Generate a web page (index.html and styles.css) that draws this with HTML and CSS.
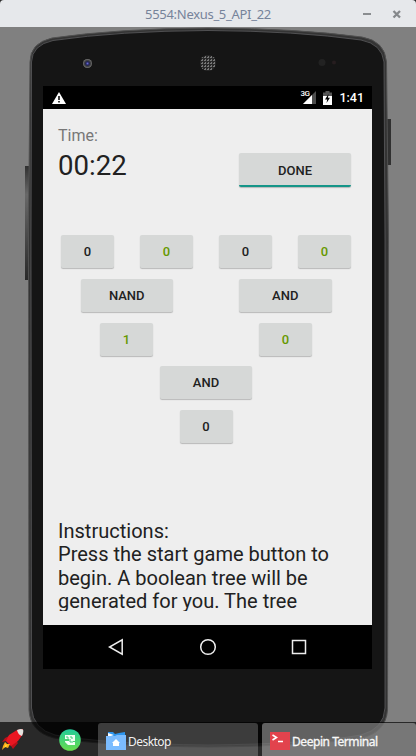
FILE: index.html
```html
<!DOCTYPE html>
<html lang="en">
<head>
<meta charset="utf-8">
<title>5554:Nexus_5_API_22</title>
<link rel="stylesheet" href="styles.css">
</head>
<body>
<header class="titlebar">
  <span class="title">5554:Nexus_5_API_22</span>
  <svg class="controls" width="60" height="27" viewBox="0 0 60 27"><path d="M7 13h8" stroke="#8a8d90" stroke-width="2"/><path d="M37.500 10l6.500 6.500M44 10l-6.500 6.500" stroke="#85888b" stroke-width="2.300"/></svg>
</header>
<main class="stage">
  <svg class="device" width="416" height="729" viewBox="0 27 416 729">
    <defs>
      <linearGradient id="key" x1="0" y1="0" x2="0" y2="1"><stop offset="0" stop-color="#303030"/><stop offset=".25" stop-color="#686868"/><stop offset="1" stop-color="#292929"/></linearGradient>
      <pattern id="mesh" width="3" height="3" patternUnits="userSpaceOnUse"><path d="M0 0h2v1H0zM1 2h1v1H1z" fill="#777"/></pattern>
      <radialGradient id="lens"><stop offset="0" stop-color="#6868d8"/><stop offset=".4" stop-color="#202350"/><stop offset=".7" stop-color="#444"/><stop offset="1" stop-color="#777"/></radialGradient>
    </defs>
    <rect x="25" y="166" width="4" height="114" fill="url(#key)"/>
    <rect x="387" y="119" width="4" height="46" fill="#303030"/>
    <path d="M28.500 240L30 62Q30 43 52 38Q118 28.500 208 28Q298 28.500 362 37Q385 41 386.500 62L388.500 240L387.500 710Q386 732 362 738Q310 746 208 747Q106 746 54 738Q30 732 29 710Z" fill="#343434" stroke="#515151"/>
    <path d="M31 240L31.500 62Q32 45 53 40.500Q119 31 208 30.500Q297 31 361 40Q382 44 384 62L385 240L385 708Q384 729 361 735Q310 744 208 745Q106 744 55 735Q33 729 31.500 708Z" fill="#151515" stroke="#5c5c5e" stroke-width=".8"/>
    <circle cx="87.500" cy="63.500" r="4.500" fill="url(#lens)"/>
    <circle cx="208" cy="63" r="8" fill="#292929"/><circle cx="208" cy="63" r="8" fill="url(#mesh)"/>
    <circle cx="322" cy="62.500" r="3.500" fill="#222"/><circle cx="334" cy="62.500" r="2" fill="#261d1f"/>
  </svg>
  <section class="screen">
    <div class="status">
      <svg width="14" height="12" viewBox="0 0 14 12"><path d="M7 0l7 12H0z" fill="#fff"/><path d="M7 4v4M7 9v1.500" stroke="#000" stroke-width="1.500"/></svg>
      <div class="status-right">
        <span class="net">3G</span>
        <svg class="signal" width="13" height="13" viewBox="0 0 13 13"><path d="M0 13L13 0v13z" fill="#4d4d4d"/><path d="M0 13L9 4v9z" fill="#fff"/></svg>
        <svg class="battery" width="9" height="14" viewBox="0 0 9 14"><path d="M0 1.500h2.500V0h4v1.500H9V6H0z" fill="#555"/><path d="M0 5h9v9H0z" fill="#fff"/><path d="M5.500 3L2 8.500h2.200L3.500 12 7 6.800H5z" fill="#000"/></svg>
        <span class="clock">1:41</span>
      </div>
    </div>
    <div class="app">
      <div class="top">
        <div><div class="label">Time:</div><div class="timer">00:22</div></div>
        <button class="btn done">DONE</button>
      </div>
      <div class="tree">
        <div class="row inputs"><button class="btn">0</button><button class="btn green">0</button><button class="btn">0</button><button class="btn green">0</button></div>
        <div class="row gates"><button class="btn wide">NAND</button><button class="btn wide">AND</button></div>
        <div class="row results"><button class="btn green">1</button><button class="btn green">0</button></div>
        <div class="row"><button class="btn wide">AND</button></div>
        <div class="row"><button class="btn">0</button></div>
      </div>
      <div class="instructions">Instructions:<br>Press the start game button to<br>begin. A boolean tree will be<br>generated for you. The tree</div>
    </div>
    <nav class="nav">
      <svg width="16" height="18" viewBox="0 0 16 18"><path d="M14.200 1.800v14.400L1.500 9z"/></svg>
      <svg width="18" height="18" viewBox="0 0 18 18"><circle cx="9" cy="9" r="7.300"/></svg>
      <svg width="16" height="18" viewBox="0 0 16 18"><path d="M1.500 2.500h13v13h-13z"/></svg>
    </nav>
  </section>
</main>
<footer class="taskbar">
  <div class="launchers">
    <svg width="23" height="22" viewBox="0 0 23 22"><path d="M4 9L10 6L17 14L12 20L10 17L5 12L1 13z" fill="#ba1019"/><path d="M5 12L8 6L16 1L22 0L22 5L17 12L10 17z" fill="#e91621"/><path d="M16 1Q20-.5 22 .5Q23 3 21 7Q17 6 16 1z" fill="#e3e3df"/><path d="M4 13L6 15L9 15L7 19L4 18L1 21L2 17z" fill="#ffad18"/><path d="M5 15L6 17L3 19z" fill="#ffe13a"/></svg>
    <svg width="22" height="22" viewBox="0 0 22 22"><defs><linearGradient id="g" x1="0" y1="0" x2="0" y2="1"><stop stop-color="#21cb9b"/><stop offset="1" stop-color="#68dc4c"/></linearGradient></defs><circle cx="11" cy="11" r="10.800" fill="url(#g)"/><path d="M6 6h10v6h-2v1h2v3H9l-3-3v-1h4v-2H6z" fill="#f1fff5"/><path d="M8 7v2h2M12 7v2h2M11 10v3h3" fill="none" stroke="#43cc7b"/></svg>
  </div>
  <div class="task desktop">
    <svg width="20" height="18" viewBox="0 0 20 18"><path d="M2 0h5l2 2 4-1 6-1v10H2z" fill="#2c95ee"/><path d="M2 1l6 2-6 2z" fill="#fff"/><path d="M0 4h9l2-1h9v15H0z" fill="#7bbcff"/><path d="M10 7l4 4h-1v3H7v-3H6z" fill="#fff"/></svg>
    <span>Desktop</span>
  </div>
  <div class="task terminal">
    <svg width="20" height="18" viewBox="0 0 20 18"><path d="M0 0h20v18H0z" fill="#e2434d"/><path d="M2.500 3l4 2.500-4 2.500M8 9.500h5" fill="none" stroke="#fff" stroke-width="1.600"/></svg>
    <span>Deepin Terminal</span>
  </div>
</footer>
</body>
</html>
```

FILE: styles.css
```css
* { box-sizing: border-box; }
body { margin: 0; width: 416px; height: 756px; overflow: hidden; position: relative; background: #2b2b2b; font-family: Roboto, "Liberation Sans", sans-serif; }
svg { display: block; flex: none; }
.titlebar { height: 27px; background: #e6e8eb; border-radius: 4px 4px 0 0; display: grid; grid-template-columns: 60px 1fr 60px; align-items: center; }
.title { grid-column: 2; text-align: center; font: 13px/27px "Noto Sans", sans-serif; letter-spacing: -.3px; color: #76839a; padding-top: 1px; white-space: nowrap; }
.stage { height: 729px; background: #808080; padding: 59px 44px 0 43px; position: relative; }
.device { position: absolute; left: 0; top: 0; }
.screen { position: relative; height: 583px; background: #eee; display: flex; flex-direction: column; }
.status { height: 23px; background: #000; color: #fff; display: flex; align-items: center; justify-content: space-between; padding: 0 8px 0 9px; }
.status-right { display: flex; height: 23px; }
.net { font: 500 8px/14px Roboto, sans-serif; letter-spacing: -.5px; margin-top: 1px; }
.signal { margin: 5px 7px 0 -6px; }
.battery { margin: 5px 7px 0 0; }
.clock { font: 500 12.500px/24px Roboto, sans-serif; }
.app { height: 516px; padding: 15px 15px 0; color: #212121; }
.top { display: flex; justify-content: space-between; height: 111px; }
.label { font-size: 16px; line-height: 24px; color: #777; }
.timer { font-size: 27.600px; line-height: 35px; }
.btn { border: 0; border-radius: 2px; padding: 0; width: 53px; height: 33px; background: #d6d8d7; color: #212121; font: 500 13px/33px Roboto, sans-serif; box-shadow: 0 1px 1px #b8b8b8; }
.done { width: 112px; height: 34px; margin: 29px 6px 0 0; border-bottom: 2px solid #159588; line-height: 32px; padding-top: 2px; }
.tree { display: flex; flex-direction: column; gap: 10.800px; padding: 0 6px 0 3px; height: 286px; }
.row { display: flex; justify-content: center; height: 33px; }
.inputs { justify-content: space-between; }
.gates { gap: 66px; }
.results { gap: 106px; }
.wide { width: 92.500px; }
.green { color: #669900; }
.instructions { font-size: 20.050px; line-height: 23.400px; height: 91px; overflow: hidden; white-space: nowrap; margin-top: -1px; }
.nav { height: 44px; background: #000; display: flex; align-items: center; justify-content: space-between; padding: 0 65px 0 65px; }
.nav path, .nav circle { fill: none; stroke: #eee; stroke-width: 1.500; }
.taskbar { position: absolute; left: 0; bottom: 0; width: 416px; height: 34px; display: flex; background: rgba(0,0,0,.68); color: #f2f2f2; font: 12px/17px "Noto Sans", sans-serif; }
.launchers { width: 98px; display: flex; align-items: center; gap: 35px; padding-left: 1px; padding-top: 2px; }
.task { display: flex; align-items: center; gap: 2px; margin-top: 1px; padding: 3px 0 0 8px; border-radius: 3px 3px 0 0; white-space: nowrap; }
.desktop { width: 160px; background: rgba(255,255,255,.22); letter-spacing: -.55px; }
.terminal { width: 154px; margin-left: 4px; background: rgba(255,255,255,.37); letter-spacing: -.45px; -webkit-text-stroke: .3px #fff; }
```
